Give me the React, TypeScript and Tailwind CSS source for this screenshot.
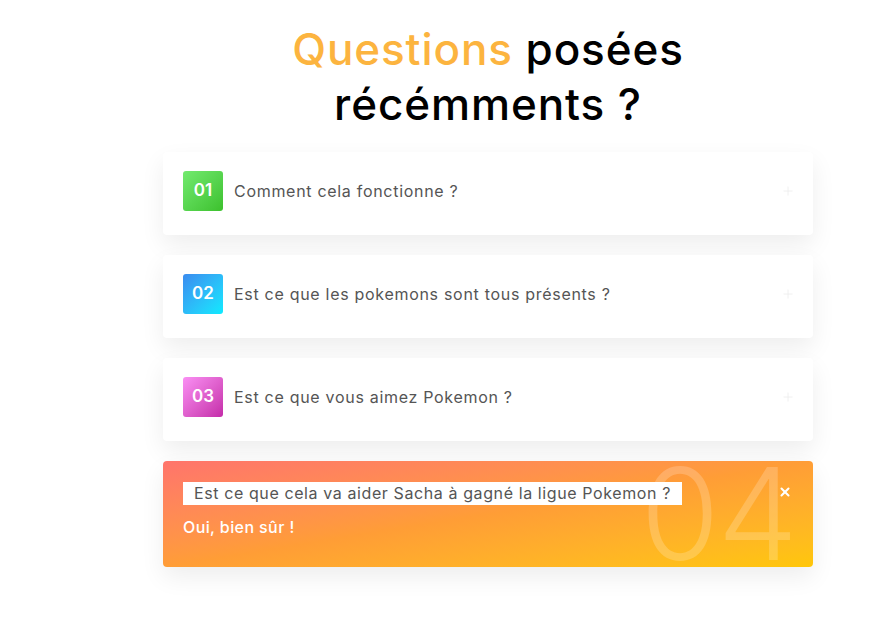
import { X, Plus } from "lucide-react";

type Item = { num: string; question: string; badge: string };

const items: Item[] = [
  { num: "01", question: "Comment cela fonctionne ?", badge: "bg-linear-to-br from-[#72ea6e] to-[#3cc12c]" },
  { num: "02", question: "Est ce que les pokemons sont tous présents ?", badge: "bg-linear-to-br from-[#3a8bef] to-[#0aeaff]" },
  { num: "03", question: "Est ce que vous aimez Pokemon ?", badge: "bg-linear-to-br from-[#fa8ff4] to-[#c42aa9]" },
];

const FaqItem = ({ num, question, badge }: Item) => (
  <div className="flex items-center h-[83px] px-5 pb-[6px] bg-white rounded shadow-[0_10px_25px_rgba(0,0,0,0.07)]">
    <div className={`flex items-center justify-center w-10 h-10 rounded-[3px] text-white font-semibold text-[17px] ${badge}`}>
      {num}
    </div>
    <span className="ml-[11px] text-[16px] tracking-[0.7px] text-[#555]">{question}</span>
    <Plus className="ml-auto mr-[-2px] w-3.5 h-3.5 text-[#eee]" strokeWidth={1.5} />
  </div>
);

const App = () => {
  return (
    <div className="w-[890px] h-[619px] bg-white font-['Inter',sans-serif] overflow-hidden">
      <div className="ml-[163px] w-[650px] pt-[22px]">
        <h2 className="mx-auto w-[460px] text-center text-[44px] leading-[55px] font-medium text-black tracking-[0.9px]">
          <span className="text-[#fcb43f]">Questions</span> posées récémments ?
        </h2>

        <div className="mt-[20px] flex flex-col gap-5">
          {items.map((item) => (
            <FaqItem key={item.num} {...item} />
          ))}

          <div className="relative h-[106px] rounded overflow-hidden bg-linear-to-br from-[#ff746b] via-[#ff9d36] to-[#ffc707] shadow-[0_10px_25px_rgba(0,0,0,0.07)] px-5 pt-5">
            <span className="absolute right-[17px] top-[-11px] text-[128px] leading-none font-light text-white/20 tracking-[-2px]">
              04
            </span>
            <X className="absolute right-[21px] top-[24px] w-3.5 h-3.5 text-white" strokeWidth={3.5} />
            <div className="relative inline-block bg-white h-[23px] leading-[23px] px-[11px] text-[16px] tracking-[0.6px] text-[#555]">
              Est ce que cela va aider Sacha à gagné la ligue Pokemon ?
            </div>
            <p className="relative mt-[10px] text-[16px] tracking-[0.4px] font-medium text-white">Oui, bien sûr !</p>
          </div>
        </div>
      </div>
    </div>
  );
};

export default App;
